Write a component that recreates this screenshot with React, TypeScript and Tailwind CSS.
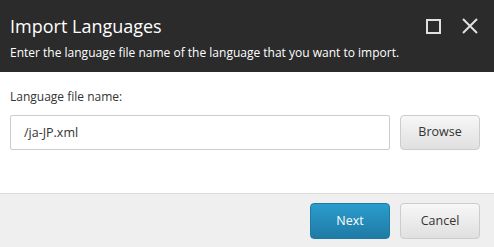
export default function App() {
  return (
    <div className="w-[494px] h-[247px] flex flex-col bg-white font-['Open_Sans',sans-serif] overflow-hidden">
      <div className="h-[72px] bg-[#2b2b2b] px-[10px] pt-[13px] text-white relative">
        <h1 className="text-[18px] leading-[26px]">Import Languages</h1>
        <p className="text-[12px] leading-[18px] mt-[5px]">
          Enter the language file name of the language that you want to import.
        </p>
        <div className="absolute top-[18px] right-[16px] flex items-center gap-[21px]">
          <svg width="15" height="15" viewBox="0 0 15 15">
            <rect x="1" y="1" width="13" height="13" fill="none" stroke="#e0e0e0" strokeWidth="2" />
          </svg>
          <svg width="16" height="16" viewBox="0 0 16 16">
            <path d="M1 1L15 15M15 1L1 15" stroke="#e0e0e0" strokeWidth="2" />
          </svg>
        </div>
      </div>
      <div className="flex-1 px-[10px] pt-[16px]">
        <label className="block text-[12px] leading-[18px] text-[#333]">Language file name:</label>
        <div className="flex gap-[10px] mt-[9px]">
          <input
            readOnly
            value="/ja-JP.xml"
            className="w-[380px] h-[35px] border border-[#ccc] rounded-[2px] px-[13px] text-[12.5px] text-[#333] outline-none"
          />
          <button className="w-[80px] h-[35px] rounded-[4px] border border-[#ccc] bg-gradient-to-b from-[#f7f7f7] to-[#e0e0e0] text-[12.5px] text-[#333]">
            Browse
          </button>
        </div>
      </div>
      <div className="h-[54px] bg-[#efefef] border-t border-[#ddd] flex justify-end items-start gap-[10px] pt-[9px] pr-[14px]">
        <button className="w-[80px] h-[36px] rounded-[4px] border border-[#1f7aa3] bg-gradient-to-b from-[#2b9ccc] to-[#1f7ba6] text-[12.5px] text-white">
          Next
        </button>
        <button className="w-[80px] h-[36px] rounded-[4px] border border-[#ccc] bg-gradient-to-b from-[#f7f7f7] to-[#e0e0e0] text-[12.5px] text-[#333]">
          Cancel
        </button>
      </div>
    </div>
  )
}
